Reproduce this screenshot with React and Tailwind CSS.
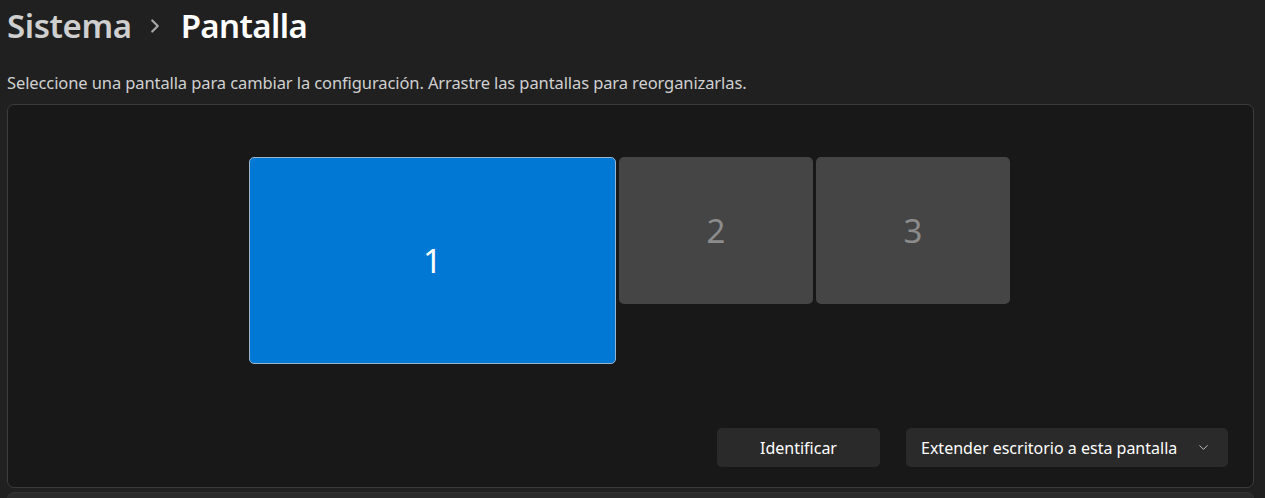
import { ChevronRight, ChevronDown } from 'lucide-react';

const font = { fontFamily: '"Noto Sans", "Open Sans", sans-serif' };

function Monitor({ n, active, className }) {
    return (
        <div
            className={`flex items-center justify-center rounded-[5px] ${
                active
                    ? 'bg-[#0078d4] border border-[#9ab4cc] text-white'
                    : 'bg-[#454545] text-[#8c8c8c]'
            } ${className}`}
        >
            <span className="text-[33px] font-normal leading-none">{n}</span>
        </div>
    );
}

export default function App() {
    return (
        <div className="w-[1265px] h-[498px] overflow-hidden bg-[#202020] pl-[7px] pr-[11px]" style={font}>
            {/* header */}
            <div className="flex items-center h-[52px] pb-[2px]">
                <h1 className="text-[33px] font-semibold text-[#cfcfcf] tracking-[-0.4px] leading-none">Sistema</h1>
                <ChevronRight size={22} strokeWidth={2.4} className="text-[#a8a8a8] ml-[12px] mr-[15px] mt-[2px]" />
                <h1 className="text-[33px] font-semibold text-white tracking-[-0.6px] leading-none">Pantalla</h1>
            </div>

            <p className="mt-[21px] text-[16.5px] text-[#d0d0d0] leading-[20px] tracking-[-0.1px]">
                Seleccione una pantalla para cambiar la configuración. Arrastre las pantallas para reorganizarlas.
            </p>

            {/* display arrangement panel */}
            <div className="mt-[11px] h-[384px] rounded-[7px] border border-[#3c3c3c] bg-[#181818] flex flex-col">
                <div className="flex justify-center items-start gap-[3px] pt-[52px] pr-[2px]">
                    <Monitor n="1" active className="w-[367px] h-[207px]" />
                    <Monitor n="2" className="w-[194px] h-[147px]" />
                    <Monitor n="3" className="w-[194px] h-[147px]" />
                </div>

                <div className="mt-auto mb-[20px] mr-[25px] flex justify-end gap-[26px]">
                    <button className="w-[163px] h-[39px] rounded-[5px] bg-[#2a2a2a] text-[16px] text-white">
                        Identificar
                    </button>
                    <button className="w-[322px] h-[39px] rounded-[5px] bg-[#2a2a2a] text-[16px] text-white flex items-center pl-[15px] pr-[17px]">
                        <span className="flex-1 text-left">Extender escritorio a esta pantalla</span>
                        <ChevronDown size={15} strokeWidth={1.5} className="text-[#c8c8c8]" />
                    </button>
                </div>
            </div>

            {/* next card peeking in */}
            <div className="mt-[4px] h-[20px] rounded-t-[7px] border border-[#333] bg-[#2b2b2b]" />
        </div>
    );
}
